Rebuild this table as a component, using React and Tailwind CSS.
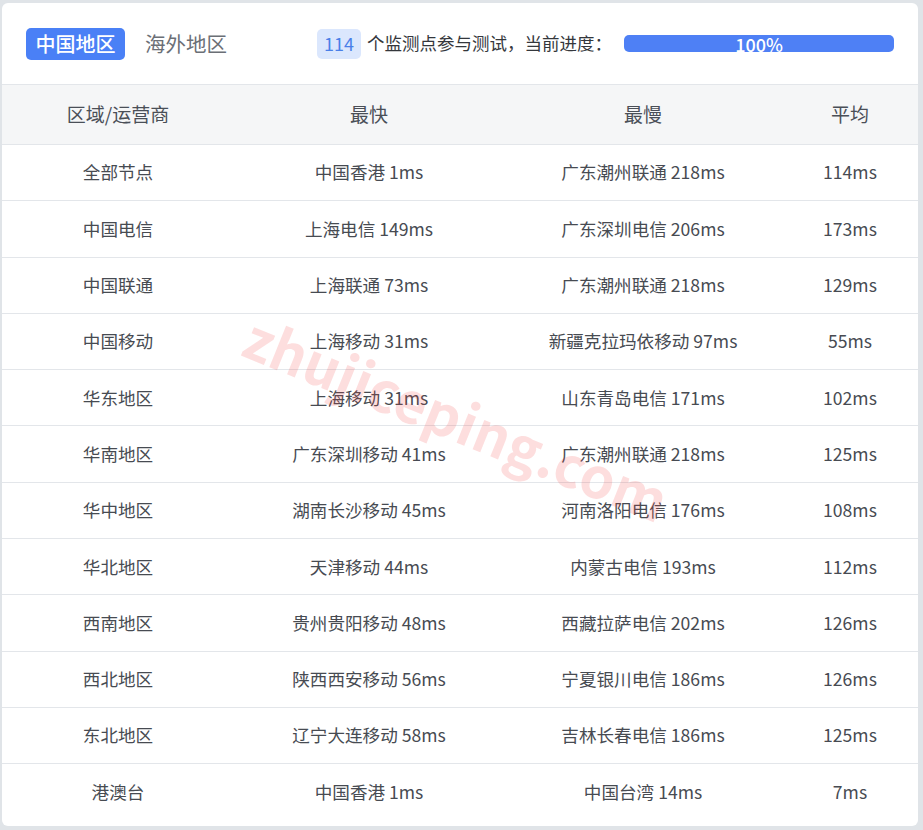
const rows = [
  ["全部节点", "中国香港 1ms", "广东潮州联通 218ms", "114ms"],
  ["中国电信", "上海电信 149ms", "广东深圳电信 206ms", "173ms"],
  ["中国联通", "上海联通 73ms", "广东潮州联通 218ms", "129ms"],
  ["中国移动", "上海移动 31ms", "新疆克拉玛依移动 97ms", "55ms"],
  ["华东地区", "上海移动 31ms", "山东青岛电信 171ms", "102ms"],
  ["华南地区", "广东深圳移动 41ms", "广东潮州联通 218ms", "125ms"],
  ["华中地区", "湖南长沙移动 45ms", "河南洛阳电信 176ms", "108ms"],
  ["华北地区", "天津移动 44ms", "内蒙古电信 193ms", "112ms"],
  ["西南地区", "贵州贵阳移动 48ms", "西藏拉萨电信 202ms", "126ms"],
  ["西北地区", "陕西西安移动 56ms", "宁夏银川电信 186ms", "126ms"],
  ["东北地区", "辽宁大连移动 58ms", "吉林长春电信 186ms", "125ms"],
  ["港澳台", "中国香港 1ms", "中国台湾 14ms", "7ms"],
];

const Row = ({ cells, header, last }) => (
  <div
    className={
      "flex items-center " +
      (header
        ? "h-[60px] bg-[#f5f6f7] border-b border-[#e3e6ea] text-[19px] text-[#4a4f57]"
        : "h-[56.3px] text-[17.6px] text-[#474b52] " +
          (last ? "" : "border-b border-[#e3e6ea]"))
    }
  >
    <div className="w-[232px] text-center whitespace-nowrap">{cells[0]}</div>
    <div className="w-[270px] text-center whitespace-nowrap">{cells[1]}</div>
    <div className="w-[278px] text-center whitespace-nowrap">{cells[2]}</div>
    <div className="w-[136px] text-center whitespace-nowrap">{cells[3]}</div>
  </div>
);

export default function App() {
  return (
    <div
      className="w-[923px] h-[830px] bg-[#e0e4e8] pl-[2px] pt-[3px]"
      style={{ fontFamily: '"Noto Sans CJK SC", "Noto Sans", sans-serif' }}
    >
      <div className="relative w-[916px] h-[823px] bg-white rounded-md overflow-hidden">
        <div className="h-[82px] flex items-center pl-[24px] border-b border-[#e3e6ea]">
          <div className="h-[32px] w-[99px] rounded-[5px] bg-[#4a80f6] text-white text-[20px] font-medium flex items-center justify-center">
            中国地区
          </div>
          <div className="ml-[20px] text-[20.5px] text-[#6b6f76] whitespace-nowrap">
            海外地区
          </div>
          <div className="ml-[90px] h-[30px] w-[44px] rounded-[5px] bg-[#dbe7fd] text-[#4a7fe8] text-[18px] flex items-center justify-center">
            114
          </div>
          <div className="ml-[6px] w-[242px] text-[17.5px] text-[#34373c] whitespace-nowrap">
            个监测点参与测试，当前进度：
          </div>
          <div className="ml-[15px] h-[17px] w-[270px] rounded-[5px] bg-[#4e80f5] text-white text-[18px] font-medium leading-none flex items-center justify-center">
            100%
          </div>
        </div>
        <Row header cells={["区域/运营商", "最快", "最慢", "平均"]} />
        {rows.map((r, i) => (
          <Row key={i} cells={r} last={i === rows.length - 1} />
        ))}
        <div className="absolute left-[210px] top-[372px] w-[490px] text-center rotate-[22deg] text-[56px] font-bold text-[rgba(245,60,60,0.17)] pointer-events-none select-none">
          zhujiceping.com
        </div>
      </div>
    </div>
  );
}
